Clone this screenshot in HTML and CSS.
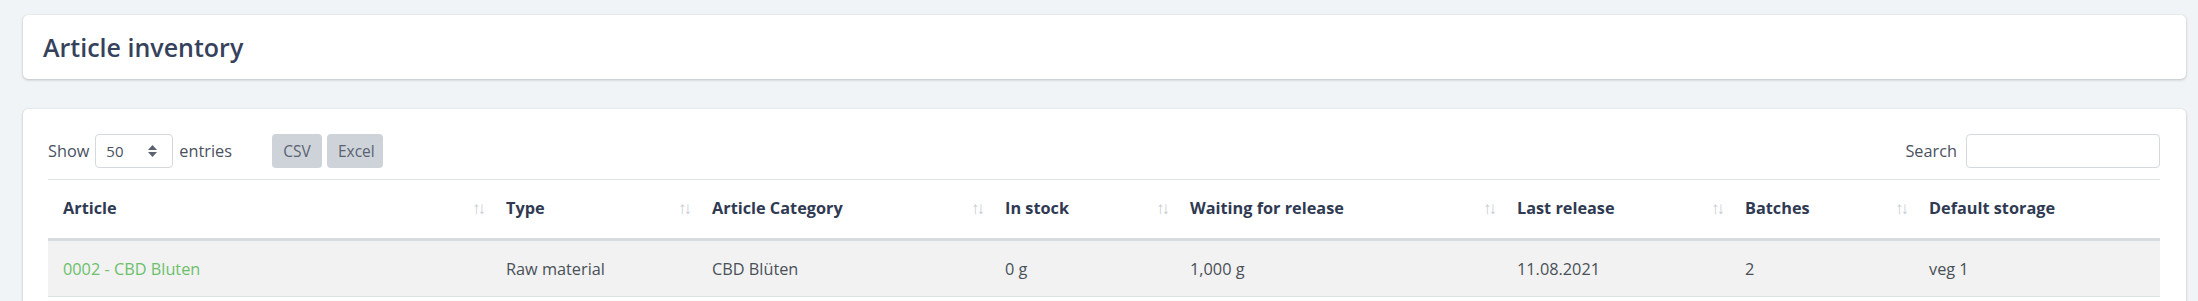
FILE: index.html
```html
<!DOCTYPE html>
<html lang="en">
<head>
  <meta charset="UTF-8">
  <title>Article inventory</title>
  <link rel="stylesheet" href="styles.css">
</head>
<body>

  <!-- Page title -->
  <div class="card title-card">
    <h1 class="page-title">Article inventory</h1>
  </div>

  <!-- Inventory table -->
  <div class="card table-card">
    <div class="controls">
      <div class="controls-left">
        <label class="length">
          Show
          <span class="select">
            <span>50</span>
            <svg class="updown" width="11" height="14" viewBox="0 0 11 14">
              <path d="M5.5 1 L10 6 H1 Z M5.5 13 L10 8 H1 Z" fill="#5b6270"/>
            </svg>
          </span>
          entries
        </label>
        <div class="buttons">
          <button class="btn">CSV</button>
          <button class="btn">Excel</button>
        </div>
      </div>
      <label class="search">
        Search
        <input type="text">
      </label>
    </div>

    <table class="grid">
      <colgroup>
        <col style="width: 443px">
        <col style="width: 206px">
        <col style="width: 293px">
        <col style="width: 185px">
        <col style="width: 327px">
        <col style="width: 228px">
        <col style="width: 184px">
        <col style="width: 246px">
      </colgroup>
      <thead>
        <tr>
          <th class="sort">Article</th>
          <th class="sort">Type</th>
          <th class="sort">Article Category</th>
          <th class="sort">In stock</th>
          <th class="sort">Waiting for release</th>
          <th class="sort">Last release</th>
          <th class="sort">Batches</th>
          <th>Default storage</th>
        </tr>
      </thead>
      <tbody>
        <tr>
          <td><a href="#" class="link">0002 - CBD Bluten</a></td>
          <td>Raw material</td>
          <td>CBD Blüten</td>
          <td>0 g</td>
          <td>1,000 g</td>
          <td>11.08.2021</td>
          <td>2</td>
          <td>veg 1</td>
        </tr>
      </tbody>
    </table>
  </div>

</body>
</html>
```

FILE: styles.css
```css
* { box-sizing: border-box; }

html, body {
  margin: 0;
  height: 100%;
  overflow: hidden;
}

body {
  background: #f0f4f7;
  padding: 15px 12px 0 23px;
  font-family: "Segoe UI", "Open Sans", sans-serif;
  font-size: 16.3px;
  color: #495057;
}

.card {
  background: #fff;
  border-radius: 5px;
  box-shadow: 0 0 1px rgba(0, 0, 0, 0.13), 0 1px 3px rgba(0, 0, 0, 0.2);
}

.title-card {
  height: 64px;
  padding: 0 20px;
  display: flex;
  align-items: center;
}

.page-title {
  margin: 0;
  font-size: 25px;
  font-weight: 600;
  color: #36415b;
}

.table-card {
  margin-top: 30px;
  padding: 25px 26px 0 25px;
  height: 300px;
}

/* controls above the table */
.controls {
  display: flex;
  justify-content: space-between;
  align-items: center;
  height: 34px;
}

.controls-left {
  display: flex;
  align-items: center;
  gap: 40px;
}

.length,
.search {
  display: flex;
  align-items: center;
  gap: 6px;
  color: #4a5160;
}

.select {
  width: 78px;
  height: 34px;
  border: 1px solid #d5d9de;
  border-radius: 4px;
  display: flex;
  align-items: center;
  justify-content: space-between;
  padding: 0 14px 0 10px;
  font-size: 15px;
  color: #4a5160;
}

.buttons {
  display: flex;
  gap: 5px;
}

.btn {
  height: 34px;
  border: none;
  border-radius: 4px;
  background: #ced3da;
  color: #5a6170;
  font-family: inherit;
  font-size: 15.5px;
  padding: 0 11px;
}

.btn:first-child { width: 50px; }
.btn:last-child { width: 56px; }

.search input {
  width: 194px;
  height: 34px;
  border: 1px solid #d5d9de;
  border-radius: 4px;
  margin-left: 3px;
}

/* table */
.grid {
  width: 100%;
  margin-top: 11px;
  border-collapse: collapse;
  table-layout: fixed;
  border-top: 1px solid #dee2e6;
}

.grid th {
  position: relative;
  text-align: left;
  font-weight: 700;
  color: #2f3a52;
  height: 60px;
  padding: 0 30px 2px 15px;
  border-bottom: 3px solid #d7dbe0;
}

.grid th.sort::after {
  content: "↑↓";
  position: absolute;
  right: 8px;
  top: 50%;
  transform: translateY(-55%);
  font-weight: 400;
  font-size: 17px;
  letter-spacing: -3px;
  color: #c6cbd3;
}

.grid td {
  height: 57px;
  padding: 0 15px;
  background: #f2f2f2;
  border-bottom: 1px solid #dee2e6;
}

.link {
  color: #6cc06b;
  text-decoration: none;
}
```
